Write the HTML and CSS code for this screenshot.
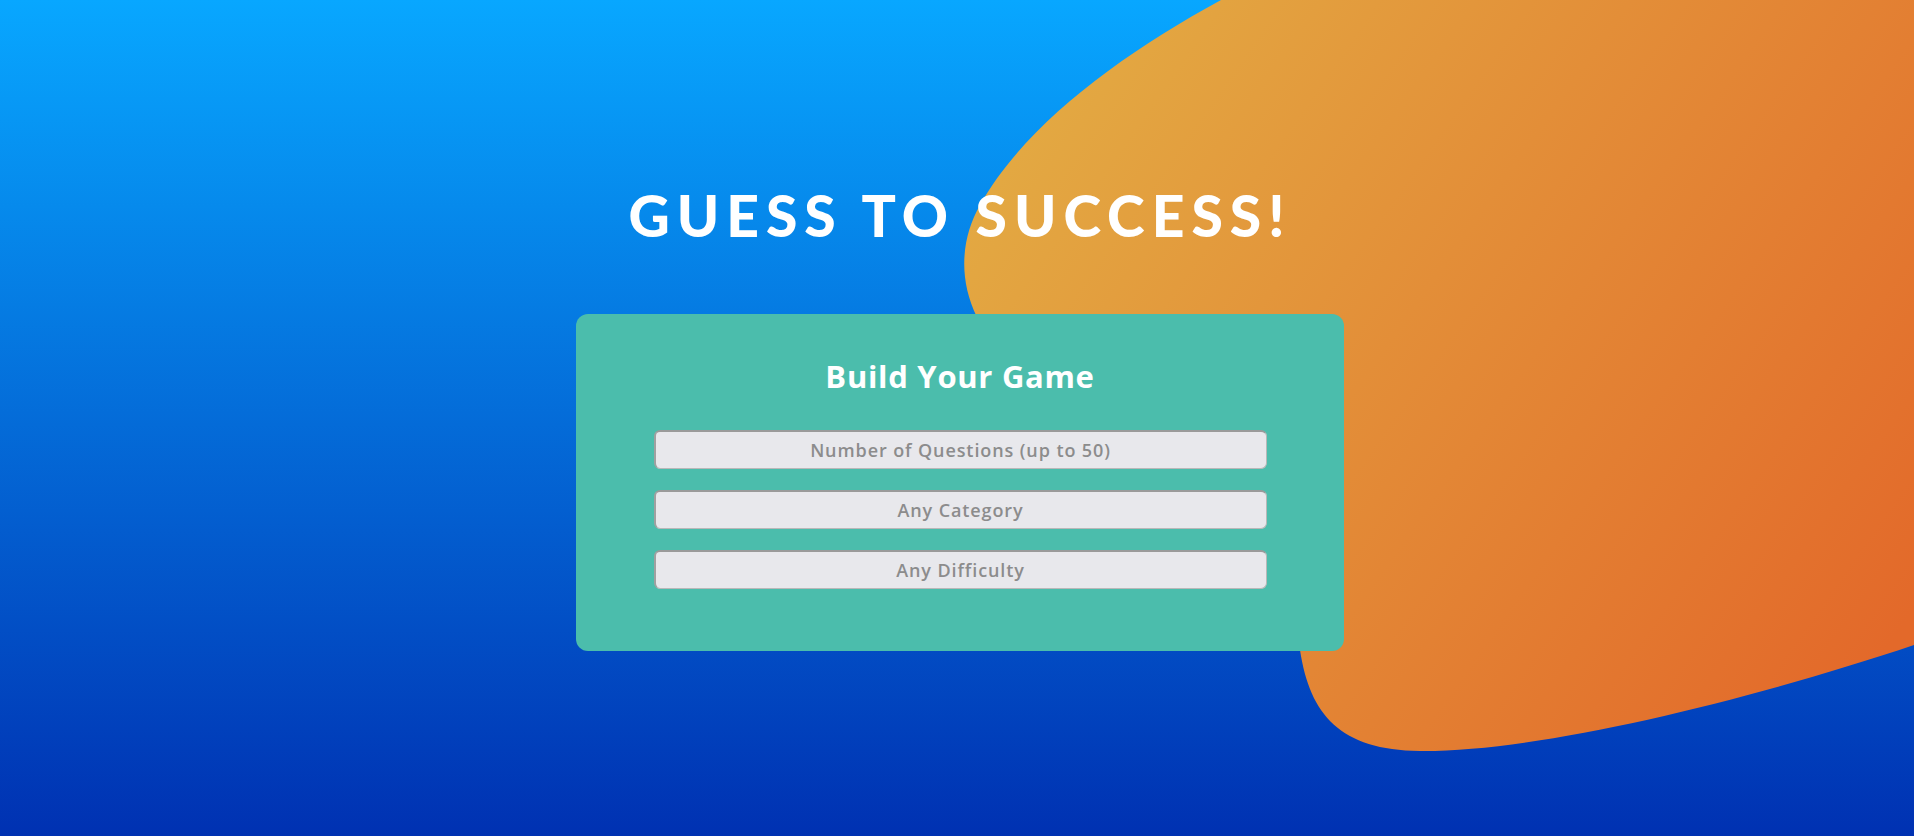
FILE: index.html
```html
<!DOCTYPE html>
<html lang="en">
<head>
<meta charset="utf-8">
<title>Guess To Success</title>
<link rel="stylesheet" href="styles.css">
</head>
<body>
<svg class="blob" viewBox="0 0 1914 836" preserveAspectRatio="none" aria-hidden="true">
  <defs>
    <linearGradient id="bg-orange" x1="1000" y1="100" x2="1850" y2="700" gradientUnits="userSpaceOnUse">
      <stop offset="0" stop-color="#e3ab43"/>
      <stop offset="1" stop-color="#e3692a"/>
    </linearGradient>
  </defs>
  <path fill="url(#bg-orange)" d="M1221,0 L1914,0 L1914,645 C1750,700 1540,752 1420,751 C1340,750 1310,715 1300,650 C1280,520 1180,470 1060,400 C960,340 948,262 980,205 C1025,125 1120,55 1221,0 Z"/>
</svg>
<main class="page">
  <h1 class="title">GUESS TO SUCCESS!</h1>
  <section class="card">
    <h2 class="card-title">Build Your Game</h2>
    <form class="form">
      <input class="field" type="number" placeholder="Number of Questions (up to 50)">
      <select class="field">
        <option>Any Category</option>
      </select>
      <select class="field">
        <option>Any Difficulty</option>
      </select>
    </form>
  </section>
</main>
</body>
</html>
```
FILE: styles.css
```css
html, body {
  margin: 0;
  padding: 0;
}
body {
  width: 100%;
  height: 836px;
  overflow: hidden;
  background: linear-gradient(180deg, #08a7ff 0%, #0031b2 100%);
  font-family: "Open Sans", "Lato", sans-serif;
  position: relative;
}
.blob {
  position: absolute;
  left: 0;
  top: 0;
  width: 1914px;
  height: 836px;
}
.page {
  position: relative;
  display: flex;
  flex-direction: column;
  align-items: center;
  padding-top: 182px;
  padding-left: 6px;
}
.title {
  margin: 0;
  color: #fff;
  font-family: "Lato", sans-serif;
  font-weight: 900;
  font-size: 57px;
  line-height: 66px;
  letter-spacing: 7px;
}
.card {
  margin-top: 66px;
  width: 768px;
  height: 337px;
  box-sizing: border-box;
  background: #4bbdac;
  border-radius: 12px;
  padding-top: 42px;
  display: flex;
  flex-direction: column;
  align-items: center;
}
.card-title {
  margin: 0;
  color: #fff;
  font-family: "Open Sans", sans-serif;
  font-size: 31px;
  font-weight: 700;
  line-height: 40px;
  letter-spacing: 0.7px;
}
.form {
  margin-top: 34px;
  display: flex;
  flex-direction: column;
  gap: 21px;
}
.field {
  appearance: none;
  -webkit-appearance: none;
  -moz-appearance: textfield;
  width: 613px;
  height: 39px;
  box-sizing: border-box;
  margin: 0;
  padding: 0 10px;
  background: #e8e8ec;
  border: 1px solid #b8b8b8;
  border-top: 2px solid #9a9a9a;
  border-left: 2px solid #a0a0a0;
  border-radius: 6px;
  font-family: "Open Sans", sans-serif;
  font-size: 18px;
  font-weight: 600;
  letter-spacing: 0.9px;
  color: #8c8c8c;
  text-align: center;
  text-align-last: center;
  outline: none;
}
.field::placeholder {
  color: #8c8c8c;
  opacity: 1;
}
.field::-webkit-inner-spin-button,
.field::-webkit-outer-spin-button {
  -webkit-appearance: none;
  margin: 0;
}
```
